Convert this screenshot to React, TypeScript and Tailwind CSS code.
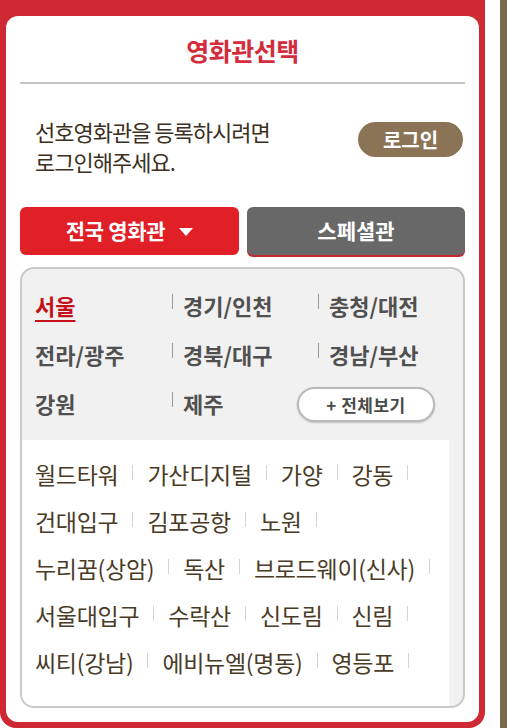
import React from "react";

const KR = { fontFamily: '"Noto Sans CJK KR", "Noto Sans", sans-serif' };

const regions: { name: string; active?: boolean }[][] = [
  [{ name: "서울", active: true }, { name: "경기/인천" }, { name: "충청/대전" }],
  [{ name: "전라/광주" }, { name: "경북/대구" }, { name: "경남/부산" }],
];

const cinemas: string[][] = [
  ["월드타워", "가산디지털", "가양", "강동"],
  ["건대입구", "김포공항", "노원"],
  ["누리꿈(상암)", "독산", "브로드웨이(신사)"],
  ["서울대입구", "수락산", "신도림", "신림"],
  ["씨티(강남)", "에비뉴엘(명동)", "영등포"],
];

function RegionCell({ name, active, first }: { name: string; active?: boolean; first?: boolean }) {
  return (
    <div className="flex items-start h-[49px] pt-[10px]">
      {!first && <span className="mt-[3px] mr-[10px] inline-block w-px h-[15px] bg-[#9a9a9a]" />}
      <span
        className={
          active
            ? "text-[22px] leading-[28px] font-bold text-[#c4111b] underline underline-offset-[5px] decoration-[2px]"
            : "text-[22px] leading-[28px] font-bold text-[#505050]"
        }
      >
        {name}
      </span>
    </div>
  );
}

export default function App() {
  return (
    <div className="w-[507px] h-[728px] flex bg-white overflow-hidden" style={KR}>
      <div className="w-[485px] h-[728px] bg-[#cf2a33] rounded-b-[16px] pt-[16px] pl-[6px] pr-[7px] pb-[6px] flex">
        <div className="flex-1 bg-white rounded-[12px] flex flex-col px-[14px]">
          <div className="pt-[18px] text-center text-[25px] leading-[32px] font-bold tracking-[-0.5px] text-[#d42c3c]">
            영화관선택
          </div>
          <div className="mt-[16px] h-[2px] bg-[#c4c4c4] mx-0" />
          <div className="mt-[32px] flex justify-between items-start">
            <div className="pl-[15px] text-[22px] leading-[30px] tracking-[-1px] text-[#3c3022]">
              선호영화관을 등록하시려면
              <br />
              로그인해주세요.
            </div>
            <div className="mt-[6px] mr-[2px] w-[105px] h-[35px] rounded-full bg-[#8a7455] text-white font-bold text-[20px] flex items-center justify-center">
              로그인
            </div>
          </div>
          <div className="mt-[31px] flex gap-[8px]">
            <div className="w-[219px] h-[48px] rounded-[6px] bg-[#e01f27] text-white font-bold text-[21px] flex items-center justify-center gap-[14px] tracking-[-0.3px]">
              <span>전국 영화관</span>
              <svg width="14" height="8" viewBox="0 0 14 8" className="mt-[2px]">
                <path d="M0 0 H14 L7 8 Z" fill="#ffffff" />
              </svg>
            </div>
            <div className="w-[218px] h-[48px] rounded-[6px] bg-[#686868] text-white font-bold text-[21px] flex items-center justify-center shadow-[0_2px_0_#c9252f]">
              스페셜관
            </div>
          </div>
          <div className="mt-[12px] h-[441px] rounded-[14px] border-2 border-[#c9c9c9] bg-[#f1f1f1] flex flex-col overflow-hidden">
            <div className="px-[13px] pt-[12px]">
              {regions.map((row, i) => (
                <div key={i} className="grid grid-cols-[137px_146px_1fr]">
                  {row.map((r, j) => (
                    <RegionCell key={r.name} name={r.name} active={r.active} first={j === 0} />
                  ))}
                </div>
              ))}
              <div className="grid grid-cols-[137px_125px_1fr]">
                <RegionCell name="강원" first />
                <RegionCell name="제주" />
                <div className="flex items-start pt-[8px]">
                  <div className="w-[138px] h-[35px] rounded-full border-2 border-[#b9b9b9] bg-white shadow-[0_1px_2px_rgba(0,0,0,0.2)] flex items-center justify-center text-[17px] font-bold text-[#4a4a4a] tracking-[0.5px]">
                    + 전체보기
                  </div>
                </div>
              </div>
            </div>
            <div className="mt-[12px] flex flex-1 pr-[14px]">
              <div className="flex-1 bg-white pl-[13px] pt-[10px]">
                {cinemas.map((row, i) => (
                  <div key={i} className="flex items-center h-[47px]">
                    {row.map((c) => (
                      <div key={c} className="flex items-center">
                        <span className="text-[23px] leading-[30px] text-[#4a3b27] tracking-[-0.3px]">{c}</span>
                        <span className="mx-[14px] -mt-[2px] inline-block w-px h-[15px] bg-[#d4d4d4]" />
                      </div>
                    ))}
                  </div>
                ))}
              </div>
            </div>
          </div>
        </div>
      </div>
      <div className="w-[15px]" />
      <div className="w-[7px] h-[728px] bg-[#7b6a4d]" />
    </div>
  );
}
